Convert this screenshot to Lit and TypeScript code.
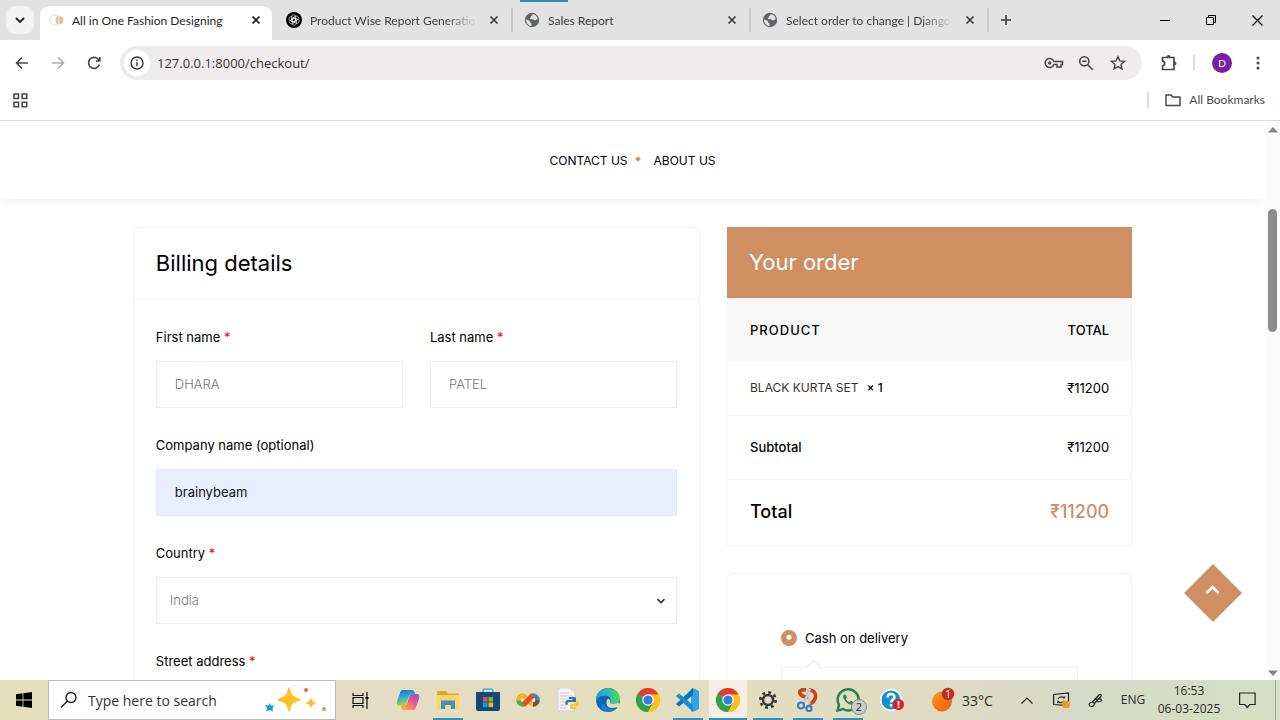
import { LitElement, html, css } from "lit";
import { customElement } from "lit/decorators.js";
import { classMap } from "lit/directives/class-map.js";

const ui = css`
  * { box-sizing: border-box; }
  button { font: inherit; color: inherit; background: none; border: 0; padding: 0; margin: 0; display: flex; align-items: center; justify-content: center; }
  a { color: inherit; text-decoration: none; }
  svg { display: block; flex: none; }
`;

const closeIcon = html`<svg width="10" height="10" viewBox="0 0 10 10" fill="none" stroke="currentColor" stroke-width="1.7"><path d="M1.5 1.5l7 7M8.500 1.500l-7 7"/></svg>`;

const globe = html`<svg width="16" height="16" viewBox="0 0 16 16"><circle cx="8" cy="8" r="7.200" fill="#5f6368"/><path d="M2 7c1 1.300 2.400 1.100 3.300 1.700 1 .7.4 1.600 1.300 2.100 1 .5 1.300 1.200.9 3.300C4.300 13.900 1.800 11 2 7zM8.500 2c.3 1-.7 1.500-1.300 2-.6.6 0 1.300-.9 1.800-.6.400-.5 1.200.2 1.400 1.300.3 2.400-.3 3.300.6.8.8 1.800.6 2.400 0 .5-.5 1.200-.3 1.600-.2C13.600 4.600 11.500 2.300 8.500 2z" fill="#e2e2e2"/></svg>`;

const favicons: Record<string, unknown> = {
  shop: html`<svg width="16" height="16" viewBox="0 0 16 16" fill="none"><path d="M9.500 13H4.500L1 8l3.500-5h5l1.500 2" stroke="#ecd6c4"/><circle cx="11.500" cy="8.300" r="4" fill="#e7bd9c"/><path d="M11 4.500v8" stroke="#f7e7da"/></svg>`,
  gpt: html`<svg width="16" height="16" viewBox="0 0 16 16" fill="none"><circle cx="8" cy="8" r="8" fill="#000"/><g stroke="#fff" stroke-width=".6"><rect x="5.500" y="2.800" width="4.200" height="7" rx="2.100"/><rect x="5.500" y="2.800" width="4.200" height="7" rx="2.100" transform="rotate(60 8 8)"/><rect x="5.500" y="2.800" width="4.200" height="7" rx="2.100" transform="rotate(120 8 8)"/><rect x="5.500" y="2.800" width="4.200" height="7" rx="2.100" transform="rotate(180 8 8)"/><rect x="5.500" y="2.800" width="4.200" height="7" rx="2.100" transform="rotate(240 8 8)"/><rect x="5.500" y="2.800" width="4.200" height="7" rx="2.100" transform="rotate(300 8 8)"/></g></svg>`,
  globe,
};

@customElement("browser-chrome")
class BrowserChrome extends LitElement {
  static styles = [ui, css`
    :host { display: block; font: 12px/16px Lato, "Open Sans", sans-serif; color: #3c3c3c; background: #fff; border-bottom: 1px solid #dcdcdc; }
    .strip { display: flex; align-items: center; height: 40px; background: #e2e2e2; position: relative; padding-left: 6px; }
    .load { position: absolute; left: 520px; top: 0; width: 48px; height: 2px; background: #2f8cbb; }
    .search { width: 28px; height: 28px; border-radius: 9px; background: #f2f2f2; color: #1f1f1f; margin-right: 6px; }
    .tab { display: flex; align-items: center; gap: 8px; flex: 0 1 238px; min-width: 0; height: 24px; padding: 0 12px 0 11px; border-right: 2px solid #c9c9c9; }
    .tab.active { flex-basis: 232px; height: 34px; align-self: flex-end; background: #fff; border: 0; border-radius: 9px 9px 0 0; padding: 0 11px 6px 8px; margin-right: 3px; color: #1f1f1f; }
    .title { flex: 1; min-width: 0; overflow: hidden; white-space: nowrap; padding-top: 2px; }
    .title.fade { -webkit-mask-image: linear-gradient(90deg, #000 80%, transparent); mask-image: linear-gradient(90deg, #000 80%, transparent); }
    .close { width: 10px; height: 10px; margin-left: 4px; }
    .plus { width: 32px; height: 32px; margin-left: 1px; }
    .win { display: flex; margin-left: auto; color: #000; }
    .win button { width: 46px; height: 40px; }
    .bar { display: flex; align-items: center; height: 46px; padding: 0 4px; }
    .tool { width: 36px; height: 36px; color: #474747; }
    .off { color: #ababab; }
    .omni { flex: 1; display: flex; align-items: center; height: 34px; border-radius: 17px; background: #eeecec; margin: 0 9px 0 8px; padding: 0 8px 0 4px; }
    .info { width: 26px; height: 26px; border-radius: 50%; background: #fff; color: #333; }
    .url { flex: 1; min-width: 0; border: 0; background: none; outline: 0; padding: 0 7px; font: 13px/20px "Open Sans", "Noto Sans", sans-serif; color: #333; }
    .omni .icon { width: 32px; height: 32px; color: #474747; }
    .sep { width: 2px; height: 16px; background: #dcdcdc; }
    .bar .sep { margin-left: 6px; }
    .avatar { width: 20px; height: 20px; border-radius: 50%; background: #7b1fa2; color: #fff; font-size: 10px; margin: 0 8px 0 17px; }
    .marks { display: flex; align-items: center; height: 34px; padding: 0 15px 6px 13px; color: #474747; }
    .all { margin-left: auto; display: flex; align-items: center; gap: 8px; }
    .all .sep { margin-right: 8px; }
    .all button { gap: 8px; }
  `];

  tabs = [
    { icon: "shop", title: "All in One Fashion Designing", active: true },
    { icon: "gpt", title: "Product Wise Report Generation", fade: true },
    { icon: "globe", title: "Sales Report" },
    { icon: "globe", title: "Select order to change | Django", fade: true },
  ];

  render() {
    return html`
      <div class="strip">
        <div class="load"></div>
        <button class="search" aria-label="Search tabs"><svg width="10" height="10" viewBox="0 0 10 10" fill="none" stroke="currentColor" stroke-width="1.8"><path d="M1 3l4 4 4-4"/></svg></button>
        ${this.tabs.map(t => html`<div class=${classMap({ tab: true, active: !!t.active })}>
          ${favicons[t.icon]}<span class=${classMap({ title: true, fade: !!t.fade })}>${t.title}</span>
          <button class="close" aria-label="Close tab">${closeIcon}</button></div>`)}
        <button class="plus" aria-label="New tab"><svg width="12" height="12" viewBox="0 0 12 12" stroke="currentColor" stroke-width="1.600"><path d="M6 1v10M1 6h10"/></svg></button>
        <div class="win">
          <button aria-label="Minimize"><svg width="10" height="10" stroke="currentColor"><path d="M0 5.500h10"/></svg></button>
          <button aria-label="Restore"><svg width="10" height="10" fill="none" stroke="currentColor"><path d="M.5 2.500h7v7h-7zM2.500 2V.5h7v7H8"/></svg></button>
          <button aria-label="Close"><svg width="11" height="11" stroke="currentColor" stroke-width="1.200"><path d="M.5.5l10 10M10.500.5l-10 10"/></svg></button>
        </div>
      </div>
      <div class="bar">
        <button class="tool" aria-label="Back"><svg width="14" height="14" viewBox="0 0 14 14" fill="none" stroke="currentColor" stroke-width="1.600"><path d="M13 7H2M7 1.500L1.500 7 7 12.500"/></svg></button>
        <button class="tool off" aria-label="Forward"><svg width="14" height="14" viewBox="0 0 14 14" fill="none" stroke="currentColor" stroke-width="1.600"><path d="M1 7h11M7 1.500L12.500 7 7 12.500"/></svg></button>
        <button class="tool" aria-label="Reload"><svg width="14" height="14" viewBox="0 0 14 14" fill="none" stroke="currentColor" stroke-width="1.700"><path d="M12.300 8.500A5.500 5.500 0 1 1 11 3l1.500 1.500M12.800 1v4h-4"/></svg></button>
        <div class="omni">
          <button class="info" aria-label="Site information"><svg width="14" height="14" viewBox="0 0 14 14" fill="none" stroke="currentColor" stroke-width="1.400"><circle cx="7" cy="7" r="6"/><path d="M7 6v4.200M7 3.600V5"/></svg></button>
          <input class="url" aria-label="Address" value="127.0.0.1:8000/checkout/">
          <button class="icon" aria-label="Passwords"><svg width="20" height="12" viewBox="0 0 20 12" fill="none" stroke="currentColor" stroke-width="1.500"><path d="M9.900 4.500A4.500 4.500 0 1 0 9.900 7.500H13V10h4V7.500h1.500v-3z"/><circle cx="5.700" cy="6" r="1.700" fill="currentColor" stroke="none"/></svg></button>
          <button class="icon" aria-label="Zoom"><svg width="16" height="16" viewBox="0 0 16 16" fill="none" stroke="currentColor" stroke-width="1.600"><circle cx="6.300" cy="6.300" r="4.600"/><path d="M9.700 9.700l5 5M4.200 6.300h4.200"/></svg></button>
          <button class="icon" aria-label="Bookmark"><svg width="16" height="16" viewBox="0 0 16 16" fill="none" stroke="currentColor" stroke-width="1.400"><path d="M8 1.700l1.900 4.200 4.500.5-3.400 3 1 4.500L8 11.600l-4 2.300 1-4.500-3.400-3 4.500-.5z"/></svg></button>
        </div>
        <button class="tool" aria-label="Extensions"><svg width="18" height="18" viewBox="0 0 18 18" fill="none" stroke="currentColor" stroke-width="1.700"><path d="M2.500 3.500h11.500v12H2.500v-3.700c2.900-.2 2.900-4.400 0-4.600z" stroke-linejoin="round"/><path d="M6.500 3a2 2 0 0 1 4 0zM14.500 7.500a2 2 0 0 1 0 4z" fill="currentColor" stroke="none"/></svg></button>
        <div class="sep"></div>
        <button class="avatar" aria-label="Profile">D</button>
        <button class="tool" aria-label="Menu"><svg width="4" height="16" fill="currentColor"><circle cx="2" cy="3" r="1.500"/><circle cx="2" cy="8" r="1.500"/><circle cx="2" cy="13" r="1.500"/></svg></button>
      </div>
      <div class="marks">
        <button aria-label="Apps"><svg width="15" height="15" fill="none" stroke="currentColor" stroke-width="1.600"><path d="M1 1h4.500v4.500H1zM9.200 1h4.500v4.500H9.200zM1 9.200h4.500v4.500H1zM9.200 9.200h4.500v4.500H9.200z"/></svg></button>
        <div class="all"><div class="sep"></div>
          <button><svg width="16" height="14" fill="none" stroke="currentColor" stroke-width="1.500" stroke-linejoin="round"><path d="M1 11.500V2h5l1.700 2H15v8.500H1z"/></svg><span>All Bookmarks</span></button></div>
      </div>`;
  }
}

@customElement("checkout-page")
class CheckoutPage extends LitElement {
  static styles = [ui, css`
    :host { display: flex; min-height: 0; position: relative; overflow: hidden; background: #fff; font: 13px/24px Inter, "Open Sans", sans-serif; color: #000; }
    .scroll { flex: 1; min-width: 0; }
    nav { display: flex; align-items: center; justify-content: center; gap: 8px; height: 78px; padding-top: 2px; font-size: 12px; box-shadow: 0 2px 10px rgba(0,0,0,.06); }
    .dot { width: 4px; height: 4px; background: #cf8f63; transform: rotate(45deg); margin: 0 6px 4px 0; }
    main { display: grid; grid-template-columns: 7fr 5fr; gap: 27px; width: 79%; margin: 28px auto 0; align-items: start; }
    .card { border: 1px solid #f3f3f3; border-radius: 5px; }
    h2 { margin: 0; font-size: 22px; font-weight: 400; line-height: 30px; }
    .head { padding: 20px 22px 21px; border-bottom: 1px solid #f3f3f3; }
    form { padding: 25px 22px; display: grid; grid-template-columns: 1fr 1fr; gap: 25px 27px; }
    .field { display: flex; flex-direction: column; gap: 12px; }
    .wide { grid-column: 1 / -1; }
    .req { color: #e00; }
    .box { width: 100%; height: 47px; border: 1px solid #ededed; padding: 0 18px 2px; font: inherit; font-weight: 300; color: #777; background: #fff; border-radius: 0; outline: 0; }
    .filled { background: #e8f0fe; border-color: #e3ebf8; color: #111; font-weight: 400; }
    .pick { display: grid; align-items: center; }
    .pick > * { grid-area: 1 / 1; }
    .pick svg { justify-self: end; margin-right: 12px; pointer-events: none; }
    select.box { appearance: none; padding: 0 13px 2px; }
    .side { display: grid; gap: 27px; }
    .title { background: #cf8f63; color: #fff; padding: 20px 22px 21px; }
    table { width: 100%; border-collapse: collapse; border: 1px solid #f3f3f3; border-top: 0; }
    th, td { font-weight: 400; padding: 0 22px; text-align: left; }
    th:last-child, td:last-child { text-align: right; }
    thead th { height: 63px; background: #f8f8f8; font-weight: 500; }
    .spaced { letter-spacing: 1px; }
    .item td { height: 54px; }
    .name { font-size: 12px; color: #333; margin-right: 8px; }
    .qty { font-size: 12px; font-weight: 500; }
    .sub > * { height: 64px; border-top: 1px solid #f3f3f3; }
    .total > * { height: 66px; border-top: 1px solid #f3f3f3; font-size: 18px; font-weight: 500; }
    .sub th { font-weight: 500; }
    .price { color: #cf8f63; }
    .pay { padding: 52px 53px; }
    .option { display: flex; align-items: center; gap: 8px; }
    .option input { appearance: none; margin: 0; width: 16px; height: 16px; border-radius: 50%; background: radial-gradient(circle at 50% 45%, #fff 2px, #cf8f63 3px); }
    .note { position: relative; margin-top: 17px; height: 60px; border: 1px solid #f0f0f0; }
    .note::before { content: ""; position: absolute; left: 26px; top: -6px; width: 10px; height: 10px; background: #fff; border: 1px solid #e6e6e6; border-width: 1px 0 0 1px; transform: rotate(45deg); }
    .up { position: absolute; right: 38px; bottom: 58px; }
    .track { width: 15px; background: #fcfcfc; display: flex; flex-direction: column; align-items: center; padding: 6px 0 4px; }
    .thumb { width: 9px; height: 123px; border-radius: 5px; background: #8b8b8b; margin: 76px 0 auto; }
  `];

  render() {
    const req = html`<span class="req">*</span>`;
    return html`
      <div class="scroll">
        <nav><a href="#">CONTACT US</a><span class="dot"></span><a href="#">ABOUT US</a></nav>
        <main>
          <section class="card">
            <div class="head"><h2>Billing details</h2></div>
            <form>
              <div class="field"><label for="first">First name ${req}</label><input class="box" id="first" value="DHARA"></div>
              <div class="field"><label for="last">Last name ${req}</label><input class="box" id="last" value="PATEL"></div>
              <div class="field wide"><label for="company">Company name (optional)</label><input class="box filled" id="company" value="brainybeam"></div>
              <div class="field wide"><label for="country">Country ${req}</label>
                <div class="pick"><select class="box" id="country"><option>India</option></select>
                <svg width="8" height="6" viewBox="0 0 8 6" fill="none" stroke="#333" stroke-width="1.600"><path d="M.5 1L4 4.500 7.500 1"/></svg></div></div>
              <div class="field wide"><label for="street">Street address ${req}</label><input class="box" id="street"></div>
            </form>
          </section>
          <div class="side">
            <section>
              <div class="title"><h2>Your order</h2></div>
              <table>
                <thead><tr><th class="spaced">PRODUCT</th><th>TOTAL</th></tr></thead>
                <tbody>
                  <tr class="item"><td><span class="name">BLACK KURTA SET</span><span class="qty">× 1</span></td><td>₹11200</td></tr>
                  <tr class="sub"><th>Subtotal</th><td>₹11200</td></tr>
                  <tr class="total"><th>Total</th><td class="price">₹11200</td></tr>
                </tbody>
              </table>
            </section>
            <section class="card pay">
              <div class="option"><input type="radio" id="cod" name="pay" checked><label for="cod">Cash on delivery</label></div>
              <div class="note"></div>
            </section>
          </div>
        </main>
      </div>
      <div class="track">
        <svg width="10" height="6" fill="#858585"><path d="M0 5.500L5 0l5 5.500z"/></svg>
        <div class="thumb"></div>
        <svg width="10" height="6" fill="#858585"><path d="M0 .5L5 6l5-5.500z"/></svg>
      </div>
      <button class="up" aria-label="Back to top"><svg width="58" height="58" viewBox="0 0 58 58"><path d="M29 0l29 29-29 29L0 29z" fill="#cf8f63"/><path d="M22.500 29l6-6 6 6" fill="none" stroke="#fff" stroke-width="2.600"/></svg></button>`;
  }
}

const chrome = html`<svg width="24" height="24" viewBox="0 0 24 24"><circle cx="12" cy="12" r="12" fill="#fbc116"/><path d="M12 12L1.600 6A12 12 0 0 1 22.400 6z" fill="#e33b2e"/><path d="M12 12L1.600 6A12 12 0 0 0 12 24l5.200-9z" fill="#2ba24c"/><path d="M12 6.500h10.600a12 12 0 0 1-10.600 17.500l5-9z" fill="#fbc116"/><circle cx="12" cy="12" r="5.800" fill="#fff"/><circle cx="12" cy="12" r="4.600" fill="#2f7de8"/></svg>`;

const apps = [
  { name: "Copilot", icon: html`<svg width="24" height="24" viewBox="0 0 24 24"><defs><linearGradient id="ca" x1="0" y1="0" x2=".3" y2="1"><stop offset="0" stop-color="#2463d8"/><stop offset=".5" stop-color="#21b1d0"/><stop offset="1" stop-color="#c5d33a"/></linearGradient><linearGradient id="cb" x1="1" y1="0" x2=".3" y2="1"><stop offset="0" stop-color="#8350dc"/><stop offset=".5" stop-color="#ee5890"/><stop offset="1" stop-color="#ffa34d"/></linearGradient></defs><path d="M7 2h9c2 0 2.500 1.500 3 4h-3c-2 0-2.700 1-3.200 2.700L10.500 16c-.5 1.500-1.200 2-3 2H3.500C.8 18 .4 15.500 1 13.500L4 5c.6-2 1.300-3 3-3z" fill="url(#ca)"/><path d="M17 22H8c-2 0-2.500-1.500-3-4h3c2 0 2.700-1 3.200-2.700L13.500 8c.5-1.500 1.200-2 3-2h4c2.700 0 3.100 2.500 2.500 4.500L20 19c-.6 2-1.300 3-3 3z" fill="url(#cb)"/></svg>` },
  { name: "File Explorer", open: true, icon: html`<svg width="22" height="20" viewBox="0 0 22 20"><path d="M0 2a1 1 0 0 1 1-1h8l2 2.500h10a1 1 0 0 1 1 1V18H0z" fill="#e5a522"/><path d="M0 5h22v13a1 1 0 0 1-1 1H1a1 1 0 0 1-1-1z" fill="#fcd462"/><path d="M4 19v-8.500h14V19h-4v-4H8v4z" fill="#3f8fd0"/></svg>` },
  { name: "Store", icon: html`<svg width="24" height="24" viewBox="0 0 24 24"><path d="M7 4V2.500A1.500 1.500 0 0 1 8.500 1h7A1.500 1.500 0 0 1 17 2.500V4" fill="none" stroke="#2fb5e6" stroke-width="1.500"/><path d="M0 4h24v17a2 2 0 0 1-2 2H2a2 2 0 0 1-2-2z" fill="#15477f"/><path d="M7 9h4.600v4.600H7z" fill="#f25022"/><path d="M12.500 9h4.600v4.600h-4.600z" fill="#7fba00"/><path d="M7 14.500h4.600v4.600H7z" fill="#00a4ef"/><path d="M12.500 14.500h4.600v4.600h-4.600z" fill="#ffb900"/></svg>` },
  { name: "Assistant", icon: html`<svg width="24" height="16" viewBox="0 0 24 16" fill="none" stroke-width="4.500"><path d="M12 8C9.500 11 8.500 12.500 6.500 12.500A4.300 4.300 0 0 1 2.500 8" stroke="#5ba84b"/><path d="M12 8c2.500-3 3.500-4.500 5.500-4.500A4.300 4.300 0 0 1 21.500 8" stroke="#3f86c8"/><path d="M2.500 8.500A4.300 4.300 0 0 1 6.500 3.500c2 0 3 1.500 5.500 4.500s3.500 4.500 5.500 4.500" stroke="#f2b51f"/><path d="M21.500 8a4.300 4.300 0 0 1-4.500 4.500" stroke="#6a5a3c"/><path d="M7.500 13L17 3" stroke="#df4e29" stroke-width="5"/></svg>` },
  { name: "Python IDLE", icon: html`<svg width="24" height="24" viewBox="0 0 24 24"><path d="M2 0h12l5 5v18H2z" fill="#f4f4f4" stroke="#cfcfcf"/><path d="M4 5h9M4 8h12M4 11h12M4 14h8M4 17h6M4 20h6" stroke="#c9c9c9"/><path d="M14 9h4c1.500 0 2 .8 2 2v3h-6c-2 0-2.500 1-2.500 3H11c-2.500 0-2-5 .5-5h5v-1H13c0-1.500 0-2 1-2z" fill="#3674a8"/><path d="M20.500 12.500c3-.5 3 5.500.5 5.500h-4v1h3.500c0 2-1 2.500-3 2.500s-3.500-.5-3.500-2v-2c0-1.500 1-2 2-2h3c1.200 0 1.500-1 1.500-3z" fill="#f5c83a"/></svg>` },
  { name: "Edge", icon: html`<svg width="24" height="24" viewBox="0 0 24 24"><defs><linearGradient id="eg" x1="0" y1=".3" x2="1" y2=".3"><stop offset="0" stop-color="#1b9de2"/><stop offset=".6" stop-color="#2bc4a9"/><stop offset="1" stop-color="#63d64f"/></linearGradient></defs><circle cx="12" cy="12" r="12" fill="#1267b4"/><path d="M0 11C1 4 6 0 12 0c7 0 12 5 12 10 0 4-3 6-6.500 6-3 0-4-1.300-3.300-2.300C16 10.500 13 7.500 9 7.500 4 7.500 0 11 0 14z" fill="url(#eg)"/><path d="M10.500 15c0-2 .5-3.500 1.500-4.200 1.700.5 2.400 1.700 2.200 2.900-.7 1 .3 2.300 3.300 2.300 2 0 3.800-.8 4.800-1.800L24 19l-4 .5C14 21 10.500 19 10.500 15z" fill="#e3ddc0"/><path d="M8 15c0 5 6 8 13.500 4.500C18 25 8 25 5 19z" fill="#1684d0"/></svg>` },
  { name: "Chrome", icon: chrome },
  { name: "Visual Studio Code", open: true, icon: html`<svg width="24" height="24" viewBox="0 0 24 24"><path d="M17 0l6 3v18l-6 3-2-1V1z" fill="#2ba3ee"/><path d="M17 7L3 18.500 0 16 17 0z" fill="#0f73b8"/><path d="M17 17L3 5.500 0 8l17 16z" fill="#1a8bd5"/></svg>` },
  { name: "Chrome", open: true, active: true, icon: chrome },
  { name: "Settings", open: true, icon: html`<svg width="18" height="18" viewBox="0 0 18 18" fill="none" stroke="#3d3a35"><circle cx="9" cy="9" r="5" stroke-width="2.400"/><circle cx="9" cy="9" r="7.600" stroke-width="2.800" stroke-dasharray="2.800 3.169"/></svg>` },
  { name: "Snipping Tool", open: true, icon: html`<svg width="24" height="24" viewBox="0 0 24 24" fill="none"><path d="M10 2C5 1 3 3 4 5.500s4 3.500 8 3.500M13 2c6 0 7.500 5 6 9-1 2.500-3 4-6 5" stroke="#c94517" stroke-width="3.600"/><path d="M7.500 15.500L14 1M13.500 16.500L12 1" stroke="#c3c8cc" stroke-width="2.400"/><circle cx="5" cy="17.500" r="3" stroke="#3180c8" stroke-width="2.200"/><circle cx="13" cy="20.500" r="2.600" stroke="#3180c8" stroke-width="2.200"/></svg>` },
  { name: "WhatsApp", open: true, badge: "2", icon: html`<svg width="24" height="24" viewBox="0 0 24 24"><path d="M1.500 22.500L3 17a10.500 10.500 0 1 1 4 4z" fill="none" stroke="#23864f" stroke-width="2.500"/><path d="M8.500 6.500c-2 1-1.700 3.700 1 6.700s6 5 8 2.300c.6-1-.2-1.500-2.700-2.700l-1.500 1.400c-1.700-.7-2.800-2-3.500-3.400l1.100-1.300c-.8-2.500-1.200-3.500-2.400-3z" fill="#23864f"/></svg>` },
];

@customElement("task-bar")
class TaskBar extends LitElement {
  static styles = [ui, css`
    :host { display: flex; height: 40px; font: 12px/18px "Open Sans", "Noto Sans", sans-serif; color: #2a2a26; background: linear-gradient(90deg, #e2dfbc 0%, #e5dcc4 30%, #e4dfbf 48%, #e2dcc1 68%, #d6dac8 84%, #d6dfc3 100%); }
    .start { width: 48px; }
    .search { display: flex; align-items: center; width: 288px; background: #fff; border: 1px solid #bdbdb7; padding: 0 8px 0 11px; gap: 6px; }
    .search input { flex: 1; min-width: 0; border: 0; outline: 0; padding: 2px 4px 0; background: none; font: 14px/20px "Open Sans", "Noto Sans", sans-serif; }
    .search input::placeholder { color: #333; opacity: 1; }
    .view { width: 48px; margin-right: 4px; }
    .app { position: relative; width: 40px; }
    .open::after { content: ""; position: absolute; left: 5px; right: 5px; bottom: 0; height: 2px; background: #3290bf; }
    .active { background: linear-gradient(#f4f0e3, #f4f0e3) center / 38px 100% no-repeat; }
    .active::after { left: 1px; right: 1px; }
    .badge { position: absolute; right: 1px; bottom: 5px; width: 16px; height: 16px; border: 1px solid #888; border-radius: 50%; background: #cbcec4; font-size: 11px; line-height: 14px; }
    .help { width: 48px; }
    .weather { gap: 7px; padding-left: 16px; }
    .temp { font-size: 14px; padding-top: 2px; }
    .tray { display: flex; margin-left: auto; }
    .tray button { width: 34px; }
    .tray .lang { width: 42px; }
    .tray .clock { width: 70px; flex-direction: column; }
    .tray .notes { width: 46px; margin-right: 5px; }
    .end { width: 5px; border-left: 1px solid #9ba58c; }
  `];

  render() {
    return html`
      <button class="start" aria-label="Start"><svg width="16" height="16" viewBox="0 0 16 16"><path d="M0 2.200L6.600 1.300v6.300H0zM7.400 1.200L16 0v7.600H7.400zM0 8.400h6.600v6.300L0 13.800zM7.400 8.400H16V16l-8.600-1.200z"/></svg></button>
      <label class="search"><svg width="18" height="18" viewBox="0 0 18 18" fill="none" stroke="#222" stroke-width="1.400"><circle cx="11" cy="6.500" r="5"/><path d="M7.500 10L1 16.500"/></svg>
        <input aria-label="Search" placeholder="Type here to search">
        <svg width="62" height="26" viewBox="0 0 62 26"><path d="M24 1c2 8 3 9 11 12-8 2-9 3-11 11-2-8-3-9-11-11 8-3 9-4 11-12z" fill="#fcc329" stroke="#fcc329" stroke-width="1.500" stroke-linejoin="round"/><path d="M46 10c1 4 2 5 6 6-4 1-5 2-6 6-1-4-2-5-6-6 4-1 5-2 6-6z" fill="#fdbb3c"/><path d="M4 16l2 2.500 3.500 0-2 2.500.5 3.500-3-1.500L1 24l1-3-2-3 3.500.5z" fill="#199ddd"/><circle cx="41" cy="3" r="2" fill="#e66a3c"/><circle cx="59" cy="22" r="2" fill="#8dc044"/></svg>
      </label>
      <button class="view" aria-label="Task view"><svg width="17" height="17" viewBox="0 0 17 17" fill="none" stroke="#111" stroke-width="1.200"><path d="M1 1v2.500h10V1M1 5.500h10v6H1zM1 16v-2.500h10V16M15 0v17"/><path d="M13.500 6h3" stroke-width="2"/></svg></button>
      ${apps.map(a => html`<button class=${classMap({ app: true, open: !!a.open, active: !!a.active })} aria-label=${a.name}>${a.icon}${a.badge ? html`<span class="badge">${a.badge}</span>` : ""}</button>`)}
      <button class="help" aria-label="Help"><svg width="24" height="24" viewBox="0 0 24 24"><circle cx="11" cy="12" r="11" fill="#fff"/><circle cx="11" cy="12" r="9.500" fill="#1490cf"/><path d="M7.500 9.500c0-4.700 7-4.500 7-.5 0 3-3.500 2.700-3.500 5.500M11 16v2.500" fill="none" stroke="#fff" stroke-width="2.500"/><circle cx="18.500" cy="16.500" r="5.500" fill="#e11b22"/><path d="M18.500 13v4.500M18.500 18.500V20" stroke="#fff" stroke-width="1.800"/></svg></button>
      <button class="weather"><svg width="23" height="26" viewBox="0 0 23 26"><defs><linearGradient id="sun" x1="0" y1="0" x2=".6" y2="1"><stop offset="0" stop-color="#fa9a24"/><stop offset="1" stop-color="#f4650c"/></linearGradient></defs><circle cx="10" cy="14.500" r="10" fill="url(#sun)"/><circle cx="16" cy="7" r="6.300" fill="#c52c22"/><text x="16" y="11" font-size="10" fill="#fff" text-anchor="middle">1</text></svg><span class="temp">33°C</span></button>
      <div class="tray">
        <button aria-label="Hidden icons"><svg width="12" height="7" fill="none" stroke="#222" stroke-width="1.200"><path d="M.5 6.500L6 1l5.500 5.500"/></svg></button>
        <button aria-label="Display"><svg width="17" height="16" viewBox="0 0 17 16" fill="none" stroke="#222" stroke-width="1.200"><path d="M.6 2.500L15.500.8v12.700l-14.900-1zM5 7a3.500 3 0 0 1 6-1l1-1.500M11 9a3.500 3 0 0 1-6 .5L4.500 11"/><rect x="9.500" y="9" width="7" height="7" rx="1.500" fill="#fb9812" stroke="none"/></svg></button>
        <button aria-label="Pen"><svg width="15" height="15" viewBox="0 0 15 15" fill="none" stroke="#222" stroke-width="1.200"><path d="M4.500 9L11 2c1.500-1.500 3 0 1.800 1.500L6.500 10.500zM4.500 9C1 9.500.5 12 2 13c2.500 1.200 4.500-.5 4.500-2.500M7 6.500l4-.5c3-.3 3 2 1 2.500L9 9"/></svg></button>
        <button class="lang">ENG</button>
        <button class="clock"><span>16:53</span><span>06-03-2025</span></button>
        <button class="notes" aria-label="Notifications"><svg width="17" height="17" fill="none" stroke="#222" stroke-width="1.200"><path d="M.6 1h15.500v11.500h-5.300l-2.500 3-2.500-3H.6z"/></svg></button>
        <div class="end"></div>
      </div>`;
  }
}

@customElement("app-root")
class AppRoot extends LitElement {
  static styles = css`
    :host { display: flex; flex-direction: column; height: 100vh; overflow: hidden; }
    checkout-page { flex: 1; }
  `;
  render() {
    return html`<browser-chrome></browser-chrome><checkout-page></checkout-page><task-bar></task-bar>`;
  }
}
